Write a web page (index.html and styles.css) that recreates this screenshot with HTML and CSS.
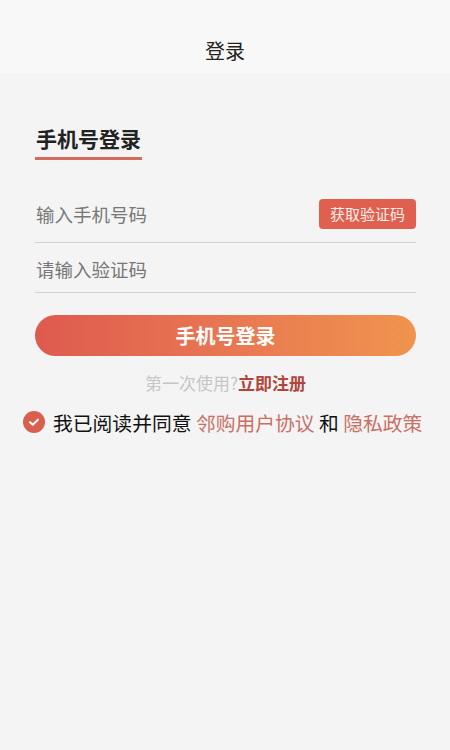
FILE: index.html
```html
<!DOCTYPE html>
<html lang="zh-CN">
<head>
<meta charset="utf-8">
<title>登录</title>
<link rel="stylesheet" href="styles.css">
</head>
<body>
<header class="topbar"><span class="title">登录</span></header>
<main class="form">
  <div class="tabs"><span class="tab">手机号登录</span></div>
  <div class="field field-phone">
    <span class="placeholder">输入手机号码</span>
    <button class="code-btn" type="button">获取验证码</button>
  </div>
  <div class="field field-code">
    <span class="placeholder">请输入验证码</span>
  </div>
  <button class="login-btn" type="button">手机号登录</button>
  <p class="register">第一次使用?<span class="register-link">立即注册</span></p>
</main>
<div class="agree">
  <span class="check">
    <svg viewBox="0 0 22 22" width="22" height="22"><circle cx="11" cy="11" r="11" fill="#d9604f"/><path d="M7 11.2 L9.8 13.8 L15 8.6" fill="none" stroke="#fff" stroke-width="2" stroke-linecap="round" stroke-linejoin="round"/></svg>
  </span>
  <span class="agree-text">我已阅读并同意 <span class="link">邻购用户协议</span> 和 <span class="link">隐私政策</span></span>
</div>
</body>
</html>
```
FILE: styles.css
```css
html, body {
  margin: 0;
  padding: 0;
}
body {
  width: 450px;
  min-height: 750px;
  background: #f4f4f4;
  font-family: "Noto Sans CJK SC", "Noto Sans", sans-serif;
  color: #222;
}
.topbar {
  height: 46px;
  padding-top: 27px;
  background: #f8f8f8;
  display: flex;
  align-items: center;
  justify-content: center;
}
.title {
  font-size: 20px;
  color: #222;
}
.form {
  padding: 50px 34px 0 35px;
  display: flex;
  flex-direction: column;
}
.tabs {
  display: flex;
}
.tab {
  font-size: 21px;
  font-weight: bold;
  line-height: 30px;
  color: #222;
  padding: 0 1px 4px 1px;
  border-bottom: 3px solid #d4695d;
}
.field {
  height: 49px;
  border-bottom: 1px solid #d2d2d2;
  display: flex;
  align-items: center;
  justify-content: space-between;
  box-sizing: content-box;
}
.field-phone {
  margin-top: 33px;
  height: 41px;
  padding-bottom: 8px;
}
.field-code {
  height: 46px;
  padding-top: 3px;
}
.placeholder {
  font-size: 18.5px;
  color: #777;
  padding-left: 1px;
}
.code-btn {
  width: 97px;
  height: 30px;
  border: none;
  border-radius: 4px;
  background: #df604f;
  color: #fbeeea;
  font-family: inherit;
  font-size: 15px;
  padding: 0;
}
.login-btn {
  margin-top: 22px;
  height: 41px;
  border: none;
  border-radius: 21px;
  background: linear-gradient(90deg, #df5a4e 0%, #e87752 50%, #f0944e 100%);
  color: #fff;
  font-family: inherit;
  font-size: 20px;
  font-weight: bold;
  padding: 0;
}
.register {
  margin: 15px 0 0;
  text-align: center;
  font-size: 17px;
  line-height: 23px;
  color: #c6c6c6;
}
.register-link {
  color: #b0463b;
  font-weight: bold;
}
.agree {
  margin-top: 14px;
  padding-left: 23px;
  display: flex;
  align-items: center;
  gap: 8px;
  height: 28px;
}
.check {
  display: flex;
  width: 22px;
  height: 22px;
}
.agree-text {
  font-size: 19.8px;
  color: #111;
  white-space: nowrap;
}
.link {
  color: #c87065;
}
```
